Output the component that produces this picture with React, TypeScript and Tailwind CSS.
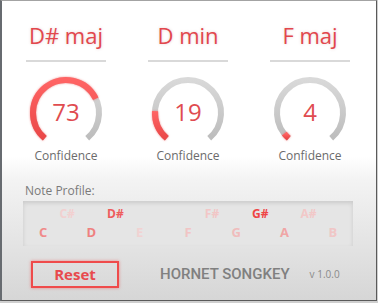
import React from "react";

const keys = [
  { name: "D# maj", value: 73 },
  { name: "D min", value: 19 },
  { name: "F maj", value: 4 },
];

const naturals = [
  { n: "C", c: "text-[#f08a8a]" },
  { n: "D", c: "text-[#ef8080]" },
  { n: "E", c: "text-[#f1d2d2]" },
  { n: "F", c: "text-[#f1c4c4]" },
  { n: "G", c: "text-[#f0bcbc]" },
  { n: "A", c: "text-[#f0a6a6]" },
  { n: "B", c: "text-[#f0c6c6]" },
];

const sharps = [
  { n: "C#", c: "text-[#f2d0d0]" },
  { n: "D#", c: "text-[#ee5c5c]" },
  { n: "", c: "" },
  { n: "F#", c: "text-[#f2c6c6]" },
  { n: "G#", c: "text-[#ef4545]" },
  { n: "A#", c: "text-[#f2c8c8]" },
  { n: "", c: "" },
];

const R = 33;
const CX = 38;
const CY = 38;

function pt(a: number) {
  const r = (a * Math.PI) / 180;
  return [CX + R * Math.cos(r), CY + R * Math.sin(r)];
}

function arc(a0: number, a1: number) {
  const [x0, y0] = pt(a0);
  const [x1, y1] = pt(a1);
  const large = a1 - a0 > 180 ? 1 : 0;
  return `M ${x0} ${y0} A ${R} ${R} 0 ${large} 1 ${x1} ${y1}`;
}

function Gauge({ value, id }: { value: number; id: string }) {
  const start = 130;
  const sweep = 280;
  const end = start + (sweep * value) / 100;
  return (
    <div className="relative w-[76px] h-[72px]">
      <svg width="76" height="72" viewBox="0 0 76 72">
        <defs>
          <linearGradient id={`g${id}`} x1="0" y1="0" x2="0" y2="1">
            <stop offset="0" stopColor="#d9d9d9" />
            <stop offset="1" stopColor="#bdbdbd" />
          </linearGradient>
          <linearGradient id={`r${id}`} x1="0" y1="0" x2="0" y2="1">
            <stop offset="0" stopColor="#ff6464" />
            <stop offset="1" stopColor="#ea4848" />
          </linearGradient>
        </defs>
        <path d={arc(start, start + sweep)} fill="none" stroke={`url(#g${id})`} strokeWidth="6" />
        <path
          d={arc(start, end)}
          fill="none"
          stroke={`url(#r${id})`}
          strokeWidth="6"
          style={{ filter: "drop-shadow(0 0 1px rgba(240,80,80,0.6))" }}
        />
      </svg>
      <div className="absolute left-0 right-0 top-[25px] text-center text-[24px] leading-[24px] text-[#e04c50]">
        {value}
      </div>
    </div>
  );
}

export default function App() {
  return (
    <div className="w-[378px] h-[303px] bg-[#cfcfcf] font-['Open_Sans',sans-serif]">
      <div className="w-[377px] h-[301px] border-l-2 border-t border-r border-b border-l-[#676b70] border-t-[#a3a3a3] border-r-[#5a5a5a] border-b-[#5a5a5a] bg-[linear-gradient(to_bottom,#ffffff_0%,#ffffff_52%,#f3f3f3_60%,#d6d6d6_100%)]">
        <div className="grid grid-cols-3 w-[366px] ml-[3px] pt-[19px]">
          {keys.map((k, i) => (
            <div key={k.name} className="flex flex-col items-center">
              <div className="text-[22px] leading-[30px] text-[#e2474d] [text-shadow:0_0_3px_rgba(200,150,150,0.45)]">
                {k.name}
              </div>
              <div className="mt-[10px] h-[2px] w-[80px] bg-[#d9d9d9]" />
              <div className="mt-[13px]">
                <Gauge value={k.value} id={String(i)} />
              </div>
              <div className="mt-[1px] text-[12px] leading-[16px] text-[#6b6b6b]">Confidence</div>
            </div>
          ))}
        </div>

        <div className="ml-[23px] mt-[19px] text-[12px] leading-[15px] text-[#7a7a7a]">Note Profile:</div>
        <div className="ml-[21px] mt-[3px] w-[330px] h-[45px] overflow-hidden bg-[#e5e5e5] shadow-[inset_0_2px_4px_rgba(0,0,0,0.12)]">
          <div className="grid grid-cols-7 w-[338px] ml-[20px] pt-[6px] text-[12px] leading-[14px] font-bold">
            {sharps.map((s, i) => (
              <div key={i} className={`text-center ${s.c}`}>
                {s.n}
              </div>
            ))}
          </div>
          <div className="grid grid-cols-7 w-[338px] ml-[-4px] mt-[3px] text-[13px] leading-[16px] font-bold">
            {naturals.map((s) => (
              <div key={s.n} className={`text-center ${s.c}`}>
                {s.n}
              </div>
            ))}
          </div>
        </div>

        <div className="flex items-center mt-[15px] ml-[29px]">
          <div className="w-[88px] h-[27px] border-2 border-[#ef4b4b] shadow-[0_0_3px_rgba(240,80,80,0.6)] flex items-center justify-center text-[15px] font-bold text-[#e84a4e]">
            Reset
          </div>
          <div className="ml-[41px] font-['Roboto',sans-serif] font-medium text-[15px] text-[#808080]">
            HORNET SONGKEY
          </div>
          <div className="ml-[20px] text-[10px] text-[#8a8a8a]">v 1.0.0</div>
        </div>
      </div>
    </div>
  );
}
